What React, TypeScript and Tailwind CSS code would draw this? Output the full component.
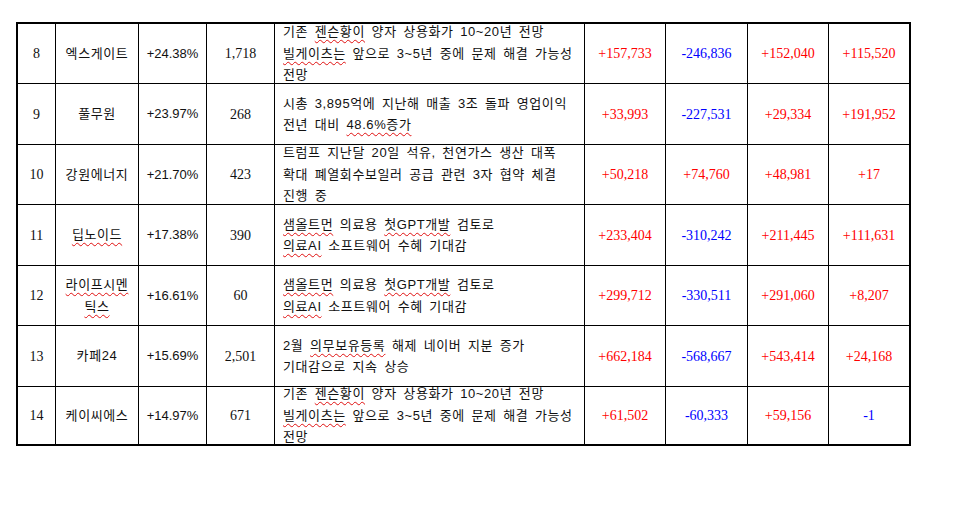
import React from 'react';

type Part = string | { u: string };

type Row = {
  no: string;
  name: Part[][];
  pct: string;
  vol: string;
  text: Part[][];
  vals: string[];
  h: string;
};

const jensen: Part[][] = [
  ['기존 ', { u: '젠슨황이' }, ' 양자 상용화가 10~20년 전망'],
  [{ u: '빌게이츠는' }, ' 앞으로 3~5년 중에 문제 해결 가능성'],
  ['전망'],
];

const altman: Part[][] = [
  [{ u: '샘올트먼' }, ' 의료용 ', { u: '첫GPT개발' }, ' 검토로'],
  [{ u: '의료AI' }, ' 소프트웨어 수혜 기대감'],
];

const rows: Row[] = [
  { no: '8', name: [['엑스게이트']], pct: '+24.38%', vol: '1,718', text: jensen, vals: ['+157,733', '-246,836', '+152,040', '+115,520'], h: 'h-[60px]' },
  {
    no: '9',
    name: [['풀무원']],
    pct: '+23.97%',
    vol: '268',
    text: [['시총 3,895억에 지난해 매출 3조 돌파 영업이익'], ['전년 대비 ', { u: '48.6%증가' }]],
    vals: ['+33,993', '-227,531', '+29,334', '+191,952'],
    h: 'h-[61px]',
  },
  {
    no: '10',
    name: [['강원에너지']],
    pct: '+21.70%',
    vol: '423',
    text: [['트럼프 지난달 20일 석유, 천연가스 생산 대폭'], ['확대 폐열회수보일러 공급 관련 3자 협약 체결'], ['진행 중']],
    vals: ['+50,218', '+74,760', '+48,981', '+17'],
    h: 'h-[60px]',
  },
  { no: '11', name: [[{ u: '딥노이드' }]], pct: '+17.38%', vol: '390', text: altman, vals: ['+233,404', '-310,242', '+211,445', '+111,631'], h: 'h-[61px]' },
  { no: '12', name: [[{ u: '라이프시멘' }], [{ u: '틱스' }]], pct: '+16.61%', vol: '60', text: altman, vals: ['+299,712', '-330,511', '+291,060', '+8,207'], h: 'h-[60px]' },
  {
    no: '13',
    name: [['카페24']],
    pct: '+15.69%',
    vol: '2,501',
    text: [['2월 ', { u: '의무보유등록' }, ' 해제 네이버 지분 증가'], ['기대감으로 지속 상승']],
    vals: ['+662,184', '-568,667', '+543,414', '+24,168'],
    h: 'h-[61px]',
  },
  { no: '14', name: [['케이씨에스']], pct: '+14.97%', vol: '671', text: jensen, vals: ['+61,502', '-60,333', '+59,156', '-1'], h: 'h-[57px]' },
];

function Lines({ lines }: { lines: Part[][] }) {
  return (
    <>
      {lines.map((line, i) => (
        <div key={i} className="whitespace-pre">
          {line.map((p, j) =>
            typeof p === 'string' ? (
              <span key={j}>{p}</span>
            ) : (
              <span key={j} className="underline decoration-wavy decoration-[#e01010] decoration-1 underline-offset-[3px]">
                {p.u}
              </span>
            )
          )}
        </div>
      ))}
    </>
  );
}

const kr = "font-['Liberation_Sans','Noto_Sans_CJK_KR',sans-serif]";
const serif = "font-['Liberation_Serif','Noto_Sans_CJK_KR',serif]";

export default function App() {
  return (
    <div className="w-[962px] h-[520px] bg-white pt-[22px] pl-[16px]">
      <div className="w-[895px] border-2 border-black grid grid-cols-[38px_83px_68px_68px_310px_81px_82px_81px_80px] text-[#111]">
        {rows.map((r, ri) => {
          const last = ri === rows.length - 1;
          const cell = `${r.h} border-black ${last ? '' : 'border-b'} flex items-center`;
          return (
            <React.Fragment key={r.no}>
              <div className={`${cell} border-r justify-center text-[14px] ${serif}`}>{r.no}</div>
              <div className={`${cell} border-r justify-center text-center text-[13px] leading-[22px] tracking-[0.6px] ${kr}`}>
                <div>
                  <Lines lines={r.name} />
                </div>
              </div>
              <div className={`${cell} border-r justify-center text-[13px] ${kr}`}>{r.pct}</div>
              <div className={`${cell} border-r justify-center text-[14px] ${serif}`}>{r.vol}</div>
              <div className={`${cell} border-r pl-[8px] text-[13px] leading-[21.5px] tracking-[0.6px] [word-spacing:2.4px] ${kr}`}>
                <div>
                  <Lines lines={r.text} />
                </div>
              </div>
              {r.vals.map((v, vi) => (
                <div
                  key={vi}
                  className={`${cell} ${vi < 3 ? 'border-r' : ''} justify-center text-[14px] ${serif} ${v.startsWith('-') ? 'text-[#0000ff]' : 'text-[#ff0000]'}`}
                >
                  {v}
                </div>
              ))}
            </React.Fragment>
          );
        })}
      </div>
    </div>
  );
}
